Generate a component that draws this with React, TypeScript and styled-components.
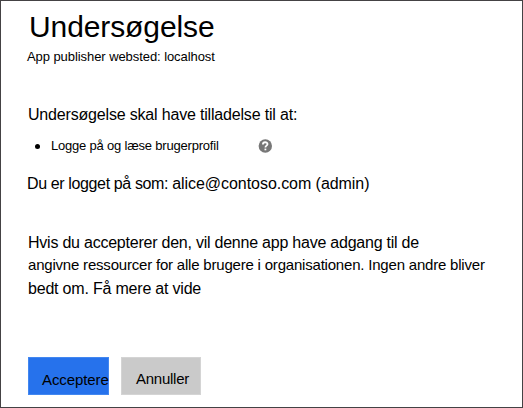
import React from "react";
import styled, { createGlobalStyle } from "styled-components";

const GlobalStyle = createGlobalStyle`
  html, body { margin: 0; padding: 0; background: #fff; }
  *, *::before, *::after { box-sizing: border-box; }
`;

const Dialog = styled.main`
  width: 523px;
  height: 408px;
  padding: 8px 0 0 27px;
  border: 1px solid #444244;
  background: #fff;
  color: #000;
  font-family: "Liberation Sans", Arial, sans-serif;
  overflow: hidden;
  white-space: nowrap;
`;

const Title = styled.h1`
  margin: 0 0 4px 1px;
  font-size: 30px;
  font-weight: 400;
  line-height: 36px;
  letter-spacing: -0.1px;
`;

const Publisher = styled.p`
  margin: 0 0 39px -1px;
  font-size: 13px;
  line-height: 16px;
  letter-spacing: -0.07px;
`;

const Line = styled.p<{ $size?: number; $spacing?: number; $after?: number }>`
  margin: 0 0 ${(p) => p.$after ?? 0}px;
  font-size: ${(p) => p.$size ?? 16}px;
  line-height: 22px;
  letter-spacing: ${(p) => p.$spacing ?? 0}px;
`;

const Account = styled(Line)`
  margin-left: -1px;
`;

const AccountLabel = styled.span`
  letter-spacing: -0.37px;
`;

const Permissions = styled.ul`
  margin: 12px 0 19px;
  padding: 0;
  list-style: none;
`;

const Permission = styled.li`
  display: flex;
  align-items: center;
  height: 16px;
  padding-left: 7px;
  font-size: 13px;
  line-height: 16px;

  &::before {
    content: "";
    width: 5px;
    height: 5px;
    margin-right: 11px;
    border-radius: 50%;
    background: #000;
  }
`;

const PermissionName = styled.span`
  width: 207px;
  letter-spacing: -0.2px;
`;

const Notice = styled.section`
  margin: 37px 0 57px;
`;

const Actions = styled.div`
  display: flex;
  gap: 12px;
`;

const Button = styled.button<{ $primary?: boolean }>`
  width: ${(p) => (p.$primary ? 81 : 80)}px;
  height: 38px;
  padding: ${(p) => (p.$primary ? "6px 0 0 13px" : "4px 0 0 14px")};
  border: 1px solid ${(p) => (p.$primary ? "#4287f0" : "#d4d4d4")};
  background: ${(p) => (p.$primary ? "#2672ec" : "#cacaca")};
  color: #000;
  font: 15px "Liberation Sans", Arial, sans-serif;
  letter-spacing: ${(p) => (p.$primary ? -0.1 : -0.25)}px;
  text-align: left;
  white-space: nowrap;
`;

const HelpIcon = () => (
  <svg width="14" height="14" viewBox="0 0 14 14" role="img" aria-label="Hjælp">
    <circle cx="7.3" cy="7" r="6.7" fill="#777" />
    <path d="M4.9 5.4C4.9 2.5 9.6 2.6 9.5 5.2C9.4 6.7 7.4 6.7 7.4 8.5" fill="none" stroke="#fff" strokeWidth="1.8" />
    <rect x="6.5" y="9.6" width="1.8" height="1.7" fill="#fff" />
  </svg>
);

export default function App() {
  return (
    <>
      <GlobalStyle />
      <Dialog>
        <Title>Undersøgelse</Title>
        <Publisher>App publisher websted: localhost</Publisher>
        <Line $spacing={-0.18}>Undersøgelse skal have tilladelse til at:</Line>
        <Permissions>
          <Permission>
            <PermissionName>Logge på og læse brugerprofil</PermissionName>
            <HelpIcon />
          </Permission>
        </Permissions>
        <Account $spacing={-0.05}>
          <AccountLabel>Du er logget på som: </AccountLabel>
          alice@contoso.com (admin)
        </Account>
        <Notice>
          <Line $spacing={-0.23}>Hvis du accepterer den, vil denne app have adgang til de</Line>
          <Line $size={15} $spacing={-0.2} $after={2}>
            angivne ressourcer for alle brugere i organisationen. Ingen andre bliver
          </Line>
          <Line $spacing={-0.2}>bedt om. Få mere at vide</Line>
        </Notice>
        <Actions>
          <Button $primary>Acceptere</Button>
          <Button>Annuller</Button>
        </Actions>
      </Dialog>
    </>
  );
}
